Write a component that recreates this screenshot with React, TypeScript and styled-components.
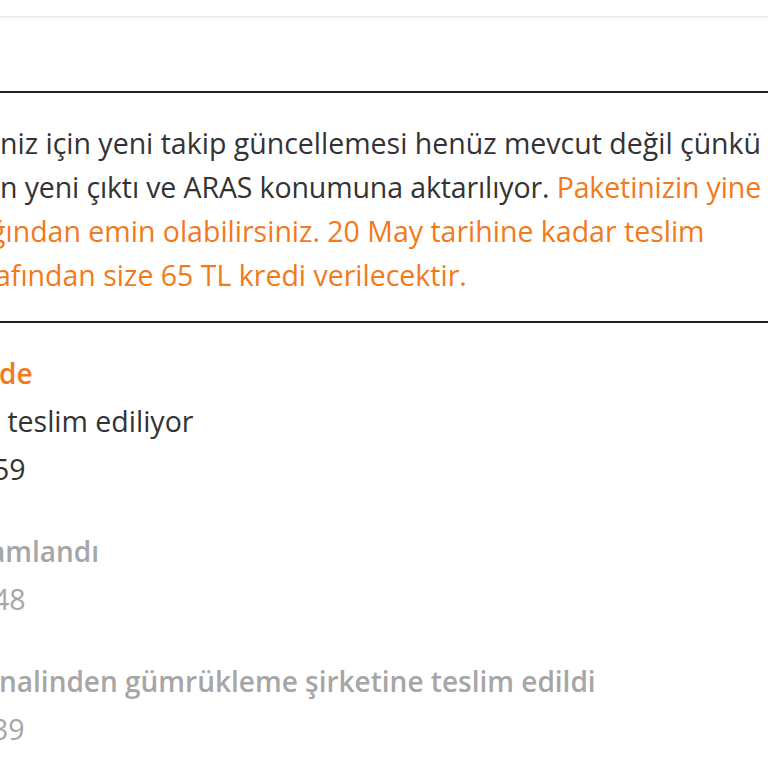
import React from 'react';
import styled, { createGlobalStyle } from 'styled-components';

const COLORS = {
  ORANGE: '#f27a1a',
  TEXT: '#333333',
  MUTED: '#a6a6a6',
  BORDER: '#1f1f1f',
};

const GlobalStyle = createGlobalStyle`
  html, body {
    margin: 0;
    padding: 0;
    background: #ffffff;
  }
  body {
    font-family: "Open Sans", "Noto Sans", sans-serif;
    font-size: 28.5px;
    color: ${COLORS.TEXT};
    overflow: hidden;
  }
`;

const Page = styled.div`
  width: 768px;
  height: 768px;
  overflow: hidden;
`;

const Header = styled.div`
  height: 16px;
  border-bottom: 1px solid #e8e8e8;
  box-shadow: 0 2px 3px rgba(0, 0, 0, 0.05);
`;

const Notice = styled.div`
  margin-top: 74px;
  border-top: 2px solid ${COLORS.BORDER};
  border-bottom: 2px solid ${COLORS.BORDER};
  padding: 28px 0 24px;
`;

const Line = styled.div<{
  $shift?: number;
  $tone?: 'dark' | 'orange' | 'muted';
  $bold?: boolean;
  $height?: number;
  $spacing?: number;
}>`
  white-space: nowrap;
  line-height: ${p => p.$height || 44}px;
  margin-left: ${p => -(p.$shift || 0)}px;
  letter-spacing: ${p => p.$spacing || 0}px;
  font-weight: ${p => (p.$bold ? 600 : 400)};
  font-size: ${p => (p.$bold ? '28px' : 'inherit')};
  color: ${p =>
    p.$tone === 'orange' ? COLORS.ORANGE : p.$tone === 'muted' ? COLORS.MUTED : COLORS.TEXT};
`;

const Orange = styled.span`
  color: ${COLORS.ORANGE};
`;

const Timeline = styled.div`
  padding-top: 26px;
  display: flex;
  flex-direction: column;
  gap: 34px;
`;

const Step = styled.div`
  display: flex;
  flex-direction: column;
`;

type StepData = { title: string; titleShift: number; status?: string; date: string; dateShift: number; active?: boolean };

const steps: StepData[] = [
  { title: 'de', titleShift: 1, status: '\u00a0teslim ediliyor', date: '59', dateShift: 7, active: true },
  { title: 'amlandı', titleShift: 11, date: '48', dateShift: 7 },
  { title: 'nalinden gümrükleme şirketine teslim edildi', titleShift: 1, date: '39', dateShift: 8 },
];

export default function App() {
  return (
    <Page>
      <GlobalStyle />
      <Header />
      <Notice>
        <Line>niz için yeni takip güncellemesi henüz mevcut değil çünkü</Line>
        <Line $spacing={-0.12}>
          n yeni çıktı ve ARAS konumuna aktarılıyor. <Orange>Paketinizin yine de</Orange>
        </Line>
        <Line $tone="orange" $shift={10}>ğından emin olabilirsiniz. 20 May tarihine kadar teslim</Line>
        <Line $tone="orange" $shift={5}>afından size 65 TL kredi verilecektir.</Line>
      </Notice>
      <Timeline>
        {steps.map(step => (
          <Step key={step.date}>
            <Line $height={48} $bold $shift={step.titleShift} $tone={step.active ? 'orange' : 'muted'}>
              {step.title}
            </Line>
            {step.status && <Line $height={48}>{step.status}</Line>}
            <Line $height={48} $shift={step.dateShift} $tone={step.active ? 'dark' : 'muted'}>
              {step.date}
            </Line>
          </Step>
        ))}
      </Timeline>
    </Page>
  );
}
